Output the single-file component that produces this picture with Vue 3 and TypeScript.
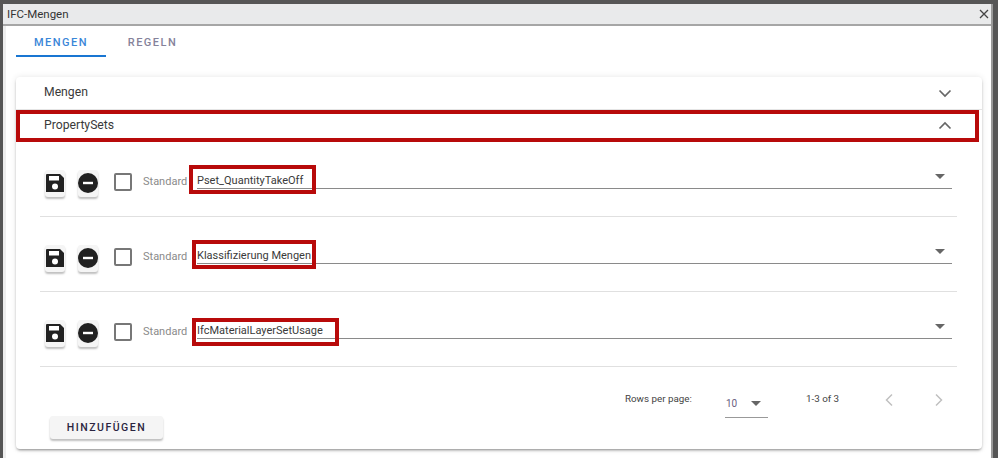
<script setup lang="ts">
const rows: { name: string; mark: number; left: number; top: number; h: number }[] = [
  { name: 'Pset_QuantityTakeOff', mark: 127, left: -8, top: -2, h: 29 },
  { name: 'Klassifizierung Mengen', mark: 124, left: -5, top: -2, h: 29 },
  { name: 'IfcMaterialLayerSetUsage', mark: 147, left: -5, top: 1, h: 28 },
]
</script>

<template>
  <div class="screen">
    <div class="win">
      <div class="titlebar">
        <span>IFC-Mengen</span>
        <svg class="close" width="10" height="10" viewBox="0 0 10 10"><path d="M1 1l8 8M9 1l-8 8" stroke="#444" stroke-width="1.3" fill="none" /></svg>
      </div>
      <div class="content">
        <div class="tabs">
          <div class="tab active">MENGEN</div>
          <div class="tab">REGELN</div>
        </div>
        <div class="card">
          <div class="head first">
            <span class="head-text">Mengen</span>
            <svg class="chev-down" width="14" height="9" viewBox="0 0 14 9"><path d="M1.5 1.5L7 7l5.500-5.500" stroke="#666" stroke-width="1.700" fill="none" /></svg>
          </div>
          <div class="head second">
            <span class="head-text">PropertySets</span>
            <svg class="chev-up" width="14" height="9" viewBox="0 0 14 9"><path d="M1.500 7.500L7 2l5.500 5.500" stroke="#666" stroke-width="1.700" fill="none" /></svg>
            <i class="mark head-mark"></i>
          </div>
          <div v-for="r in rows" :key="r.name" class="row">
            <button class="icon-btn">
              <svg width="20" height="20" viewBox="0 0 20 20"><path d="M2 1h13l4 4v14H1V2a1 1 0 0 1 1-1z" fill="#212121" /><rect x="4" y="3" width="10" height="4.500" fill="#fff" /><circle cx="10" cy="13.500" r="3" fill="#fff" /></svg>
            </button>
            <button class="icon-btn second-btn">
              <svg width="20" height="20" viewBox="0 0 20 20"><circle cx="10" cy="10" r="10" fill="#212121" /><rect x="5" y="8.800" width="10" height="2.400" fill="#fff" /></svg>
            </button>
            <span class="check"></span>
            <span class="std">Standard</span>
            <div class="field">
              <span class="value">{{ r.name }}</span>
              <span class="caret"></span>
              <i class="mark" :style="{ width: r.mark + 'px', height: r.h + 'px', left: r.left + 'px', top: r.top + 'px' }"></i>
            </div>
          </div>
          <div class="foot">
            <button class="add">HINZUFÜGEN</button>
            <div class="pager">
              <span class="rpp">Rows per page:</span>
              <div class="select"><span>10</span><span class="caret small"></span></div>
              <span class="range">1-3 of 3</span>
              <svg class="chev" width="10" height="14" viewBox="0 0 10 14"><path d="M8 1.500L2.500 7 8 12.500" stroke="#c0c0c0" stroke-width="1.500" fill="none" /></svg>
              <svg class="chev next" width="10" height="14" viewBox="0 0 10 14"><path d="M2 1.500L7.500 7 2 12.500" stroke="#c0c0c0" stroke-width="1.500" fill="none" /></svg>
            </div>
          </div>
        </div>
      </div>
    </div>
  </div>
</template>

<style>
html, body { margin: 0; padding: 0; }
</style>

<style scoped>
.screen {
  width: 998px;
  height: 458px;
  box-sizing: border-box;
  padding: 4px 5px 0 3px;
  background: #565656;
  font-family: Roboto, "Liberation Sans", sans-serif;
  overflow: hidden;
}
.win {
  height: 454px;
  display: flex;
  flex-direction: column;
  background: #eeeeee;
  border-right: 2px solid #9a9a9a;
}
.titlebar {
  height: 20px;
  flex: none;
  display: flex;
  align-items: center;
  justify-content: space-between;
  padding: 0 2px 0 4px;
  background: #e9eaeb;
  border-bottom: 2px solid #a6a6a6;
  font-size: 11.500px;
  color: #333;
}
.content {
  flex: 1;
  margin-left: 3px;
  padding: 0 9px 0 10px;
  background: #fff;
  display: flex;
  flex-direction: column;
}
.tabs { display: flex; height: 31px; margin-bottom: 20px; }
.tab {
  width: 90px;
  height: 29px;
  line-height: 33px;
  text-align: center;
  font-size: 11px;
  font-weight: 500;
  letter-spacing: 1.500px;
  color: #85829a;
}
.tab.active {
  color: #3a86d8;
  border-bottom: 2px solid #1976d2;
}
.tab + .tab { width: 93px; }
.card {
  height: 372px;
  border-radius: 4px;
  background: #fff;
  box-shadow: 0 2px 3px -1px rgba(0, 0, 0, 0.45), 0 0 6px rgba(0, 0, 0, 0.1);
}
.head {
  position: relative;
  height: 32px;
  display: flex;
  align-items: center;
  justify-content: space-between;
  padding: 0 30px 0 28px;
  font-size: 12.200px;
  color: #3a3a3a;
  box-sizing: border-box;
}
.head.first { border-bottom: 1px solid #e4e4e4; height: 33px; padding-bottom: 1px; }
.first .head-text { margin-bottom: 2px; }
.second .head-text { margin-bottom: 3px; }
.chev-down { margin-top: 2px; }
.chev-up { margin-bottom: 2px; }
.row {
  height: 75px;
  margin: 0 25px 0 24px;
  padding: 0 5px;
  box-sizing: border-box;
  display: flex;
  align-items: center;
  border-bottom: 1px solid #e0e0e0;
}
.icon-btn {
  width: 20px;
  height: 27px;
  margin-top: 8px;
  padding: 0;
  border: 0;
  border-radius: 3px;
  background: #f5f5f5;
  box-shadow: 0 2px 2px rgba(0, 0, 0, 0.25);
  display: flex;
  align-items: center;
  justify-content: center;
  flex: none;
}
.second-btn { margin-left: 13px; }
.check {
  width: 14px;
  height: 14px;
  margin-left: 16px;
  margin-top: 5px;
  border: 2px solid #777;
  border-radius: 2px;
  flex: none;
}
.std {
  margin-left: 11px;
  margin-top: 4px;
  font-size: 11px;
  color: #8a8a8a;
  width: 54px;
  flex: none;
}
.field {
  position: relative;
  flex: 1;
  height: 22px;
  margin-top: -2px;
  padding-top: 4px;
  border-bottom: 1px solid #8a8a8a;
  font-size: 11px;
  line-height: 20px;
  color: #3a3a3a;
  box-sizing: border-box;
}
.caret {
  position: absolute;
  right: 7px;
  top: 7px;
  width: 0;
  height: 0;
  border-left: 5px solid transparent;
  border-right: 5px solid transparent;
  border-top: 5px solid #666;
}
.mark {
  position: absolute;
  box-sizing: border-box;
  border: 4px solid #b80a0a;
  pointer-events: none;
}
.head-mark { left: 0; top: 0; width: 963px; height: 32px; }
.foot {
  height: 82px;
  display: flex;
  justify-content: space-between;
  padding: 0 0 0 34px;
}
.add {
  align-self: flex-end;
  margin-bottom: 10px;
  width: 113px;
  height: 23px;
  padding: 0;
  border: 0;
  border-radius: 3px;
  background: #f5f5f5;
  box-shadow: 0 2px 2px rgba(0, 0, 0, 0.25);
  font-family: inherit;
  font-size: 10.500px;
  font-weight: 500;
  letter-spacing: 1.500px;
  color: #2a2440;
}
.pager {
  display: flex;
  align-items: flex-start;
  padding: 26px 38px 0 0;
  font-size: 9.800px;
  color: #444;
}
.rpp { width: 100px; }
.select {
  position: relative;
  width: 43px;
  height: 25px;
  padding: 5px 0 0 1px;
  box-sizing: border-box;
  border-bottom: 1px solid #999;
  color: #6a6080;
  font-size: 10px;
}
.caret.small { right: 7px; top: 8px; }
.range { margin-left: 38px; width: 78px; }
.next { margin-left: 40px; }
</style>
